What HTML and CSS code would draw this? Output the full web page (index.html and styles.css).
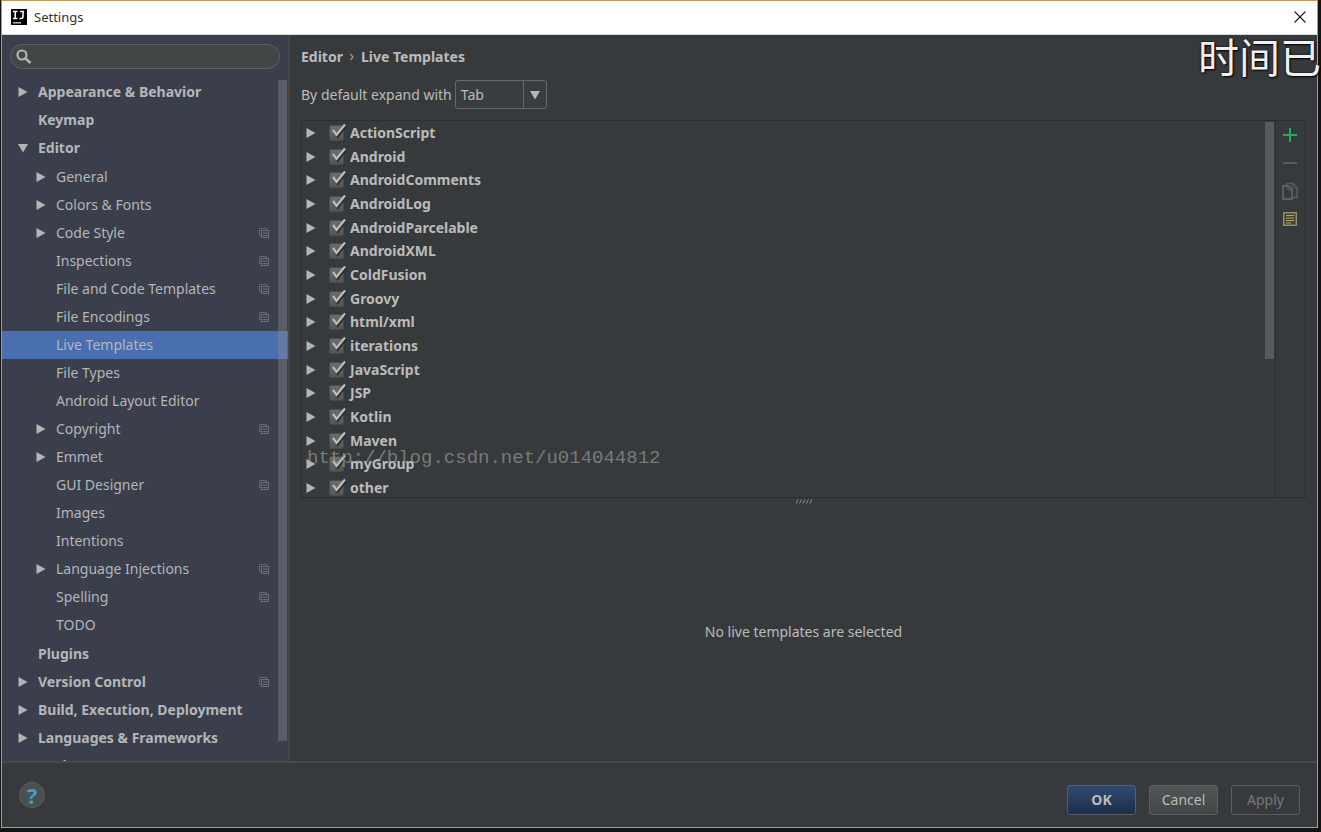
FILE: index.html
```
<!DOCTYPE html>
<html lang="en">
<head>
  <meta charset="UTF-8" />
  <title>Settings</title>
  <link rel="stylesheet" href="styles.css">
</head>
<body>

  <!-- Shared icons -->
  <svg class="defs" width="0" height="0">
    <symbol id="right" viewBox="0 0 10 10"><path d="M0.5 0L9.5 5L0.5 10Z" fill="#b4b4b4"/></symbol>
    <symbol id="down" viewBox="0 0 10 10"><path d="M0 1L10 1L5 9.5Z" fill="#b4b4b4"/></symbol>
    <symbol id="copy" viewBox="0 0 12 12">
      <path d="M3 8.5H1.5V1.5H8.5V3" fill="none" stroke="#5d6b75"/>
      <rect x="3.5" y="3.5" width="7" height="7" fill="none" stroke="#6c7176"/>
      <path d="M5 6H9.500M5 8.500H9.500" stroke="#6c7176"/>
    </symbol>
    <symbol id="tick" viewBox="0 0 18 17">
      <path d="M4.500 8L8.500 14L17 3" fill="none" stroke="#2b2b2b" stroke-width="2"/>
      <path d="M4 7L7.500 12L16 1.500" fill="none" stroke="#bdbdbd" stroke-width="2.200"/>
    </symbol>
  </svg>

  <div class="window">
    <header class="titlebar">
      <svg width="16" height="16" viewBox="0 0 16 16">
        <rect width="16" height="16" fill="#000"/>
        <path d="M2 2.500H6.500M4.250 2.500V9.500M2 9.500H6.500M9 2.500H13M12 2.500V7.500Q12 9.500 10 9.500H8.500" fill="none" stroke="#fff" stroke-width="1.500"/>
        <rect x="2" y="13" width="8" height="1.500" fill="#bbb"/>
      </svg>
      <span class="title">Settings</span>
      <button class="close" aria-label="Close">
        <svg width="12" height="12" viewBox="0 0 12 12"><path d="M0.500 0.500L11.500 11.500M11.500 0.500L0.500 11.500" stroke="#222" stroke-width="1.200"/></svg>
      </button>
    </header>

    <div class="content">
      <nav class="sidebar">
        <label class="search">
          <svg width="16" height="16" viewBox="0 0 16 16"><circle cx="6" cy="6" r="4.500" fill="none" stroke="#b4b4b4" stroke-width="2.200"/><path d="M9.500 9.500L14.500 14" stroke="#b4b4b4" stroke-width="2.500"/></svg>
          <input type="text" aria-label="Search settings">
        </label>
        <div class="tree">
          <ul>
            <li><a href="#" class="row top"><svg class="arrow"><use href="#right"/></svg><span>Appearance &amp; Behavior</span></a></li>
            <li><a href="#" class="row top"><i class="arrow"></i><span>Keymap</span></a></li>
            <li><a href="#" class="row top"><svg class="arrow"><use href="#down"/></svg><span>Editor</span></a>
              <ul class="children">
                <li><a href="#" class="row"><svg class="arrow"><use href="#right"/></svg><span>General</span></a></li>
                <li><a href="#" class="row"><svg class="arrow"><use href="#right"/></svg><span>Colors &amp; Fonts</span></a></li>
                <li><a href="#" class="row"><svg class="arrow"><use href="#right"/></svg><span>Code Style</span><svg class="copy"><use href="#copy"/></svg></a></li>
                <li><a href="#" class="row"><i class="arrow"></i><span>Inspections</span><svg class="copy"><use href="#copy"/></svg></a></li>
                <li><a href="#" class="row"><i class="arrow"></i><span>File and Code Templates</span><svg class="copy"><use href="#copy"/></svg></a></li>
                <li><a href="#" class="row"><i class="arrow"></i><span>File Encodings</span><svg class="copy"><use href="#copy"/></svg></a></li>
                <li><a href="#" class="row selected"><i class="arrow"></i><span>Live Templates</span></a></li>
                <li><a href="#" class="row"><i class="arrow"></i><span>File Types</span></a></li>
                <li><a href="#" class="row"><i class="arrow"></i><span>Android Layout Editor</span></a></li>
                <li><a href="#" class="row"><svg class="arrow"><use href="#right"/></svg><span>Copyright</span><svg class="copy"><use href="#copy"/></svg></a></li>
                <li><a href="#" class="row"><svg class="arrow"><use href="#right"/></svg><span>Emmet</span></a></li>
                <li><a href="#" class="row"><i class="arrow"></i><span>GUI Designer</span><svg class="copy"><use href="#copy"/></svg></a></li>
                <li><a href="#" class="row"><i class="arrow"></i><span>Images</span></a></li>
                <li><a href="#" class="row"><i class="arrow"></i><span>Intentions</span></a></li>
                <li><a href="#" class="row"><svg class="arrow"><use href="#right"/></svg><span>Language Injections</span><svg class="copy"><use href="#copy"/></svg></a></li>
                <li><a href="#" class="row"><i class="arrow"></i><span>Spelling</span><svg class="copy"><use href="#copy"/></svg></a></li>
                <li><a href="#" class="row"><i class="arrow"></i><span>TODO</span></a></li>
              </ul>
            </li>
            <li><a href="#" class="row top"><i class="arrow"></i><span>Plugins</span></a></li>
            <li><a href="#" class="row top"><svg class="arrow"><use href="#right"/></svg><span>Version Control</span><svg class="copy"><use href="#copy"/></svg></a></li>
            <li><a href="#" class="row top"><svg class="arrow"><use href="#right"/></svg><span>Build, Execution, Deployment</span></a></li>
            <li><a href="#" class="row top"><svg class="arrow"><use href="#right"/></svg><span>Languages &amp; Frameworks</span></a></li>
            <li><a href="#" class="row top"><i class="arrow"></i><span>Tools</span></a></li>
          </ul>
          <div class="scrollbar"></div>
        </div>
      </nav>

      <main class="main">
        <h1 class="crumbs"><span>Editor</span><svg width="6" height="8" viewBox="0 0 6 8"><path d="M1.500 1L4 4L1.500 7" fill="none" stroke="#999" stroke-width="1.200"/></svg><span>Live Templates</span></h1>
        <div class="expand">
          <label for="expandKey">By default expand with</label>
          <div class="combo">
            <select id="expandKey">
              <option>Tab</option>
              <option>Enter</option>
              <option>Space</option>
            </select>
            <span class="combo-arrow"><svg width="10" height="10"><use href="#down"/></svg></span>
          </div>
        </div>

        <section class="panel">
          <div class="list">
            <ul class="templates" id="templates"></ul>
            <div class="list-scroll"></div>
          </div>
          <div class="tools">
            <button aria-label="Add"><svg width="16" height="16" viewBox="0 0 16 16"><path d="M8 1V15M1 8H15" stroke="#27ae50" stroke-width="2"/></svg></button>
            <button aria-label="Remove" disabled><svg width="16" height="16" viewBox="0 0 16 16"><path d="M1 8H15" stroke="#5a5a5a" stroke-width="2"/></svg></button>
            <button aria-label="Copy" disabled><svg width="18" height="18" viewBox="0 0 18 18"><path d="M6 4V1.500H12L16 5.500V15.500H12" fill="none" stroke="#5c5c5c" stroke-width="1.500"/><path d="M11.500 1.500V6H16" fill="none" stroke="#5c5c5c"/><path d="M2 4H7.500L11 7.500V17H2Z" fill="#373a3c" stroke="#606060" stroke-width="1.800"/><path d="M7 4V8H11" fill="none" stroke="#606060"/></svg></button>
            <button aria-label="Restore defaults"><svg width="16" height="16" viewBox="0 0 16 16"><rect x="1.750" y="1.750" width="12.500" height="12.500" fill="#4c4420" stroke="#9b9783" stroke-width="1.300"/><path d="M4 4.500H12M4 7H12M4 9.500H12M4 12H9" stroke="#aaa37e" stroke-width="1.100"/></svg></button>
          </div>
        </section>

        <section class="details">
          <svg class="grip" width="18" height="5" viewBox="0 0 18 5"><path d="M1 4.500L3 0.500M4.500 4.500L6.500 0.500M8 4.500L10 0.500M11.500 4.500L13.500 0.500M15 4.500L17 0.500" stroke="#8a8a8a"/></svg>
          <p>No live templates are selected</p>
        </section>
      </main>
    </div>

    <footer class="footer">
      <button class="help" aria-label="Help">?</button>
      <div class="actions">
        <button class="btn ok">OK</button>
        <button class="btn">Cancel</button>
        <button class="btn" disabled>Apply</button>
      </div>
    </footer>
  </div>

  <div class="url-mark">http://blog.csdn.net/u014044812</div>
  <div class="time-mark" lang="zh">时间已</div>

  <script src="script.js"></script>
</body>
</html>
```

FILE: styles.css
```
* {
  box-sizing: border-box;
}

body {
  margin: 0;
  height: 100vh;
  padding: 0 3px 4px 1px;
  background-color: #141513;
  color: #bbb;
  font-family: "Noto Sans", "Noto Sans CJK SC", sans-serif;
  font-size: 14px;
  line-height: 20px;
  overflow: hidden;
}

ul {
  list-style: none;
  margin: 0;
  padding: 0;
}

button {
  font: inherit;
  color: inherit;
  background: none;
  border: none;
  padding: 0;
}

svg {
  flex: none;
}

.defs {
  position: absolute;
}

.window {
  height: 100%;
  display: flex;
  flex-direction: column;
  border: 1px solid #c9974f;
  background-color: #373a3c;
}

/* Title bar */
.titlebar {
  height: 34px;
  flex: none;
  display: flex;
  align-items: center;
  padding: 0 11px 2px 9px;
  background-color: #fff;
  color: #333;
  border-bottom: 1px solid #d5dadb;
}

.title {
  flex: 1;
  margin-left: 7px;
  font-size: 13px;
}

.close {
  display: flex;
}

.content {
  flex: 1;
  min-height: 0;
  display: flex;
}

/* Sidebar */
.sidebar {
  width: 288px;
  flex: none;
  display: flex;
  flex-direction: column;
  background-color: #3a3f4b;
  border-right: 2px solid #44474a;
}

.search {
  flex: none;
  height: 25px;
  margin: 9px 8px 9px 8px;
  display: flex;
  align-items: center;
  padding: 0 5px;
  background-color: #434647;
  border: 1px solid #5e6163;
  border-radius: 13px;
}

.search input {
  flex: 1;
  min-width: 0;
  background: none;
  border: none;
  outline: none;
  color: #bbb;
}

.tree {
  flex: 1;
  min-height: 0;
  position: relative;
  overflow: hidden;
}

.row {
  height: 28px;
  display: flex;
  align-items: center;
  padding: 0 18px 0 16px;
  color: #b4b6b9;
  text-decoration: none;
}

.row span {
  flex: 1;
}

.children {
  padding: 1px 0;
}

.children .row {
  padding-left: 34px;
}

.top {
  font-weight: bold;
}

.selected {
  background-color: #4a6fb1;
}

.arrow {
  width: 10px;
  height: 10px;
  margin-right: 10px;
  flex: none;
}

.copy {
  width: 12px;
  height: 12px;
}

.scrollbar {
  position: absolute;
  top: 2px;
  right: 1px;
  bottom: 20px;
  width: 9px;
  background-color: rgba(140, 140, 145, 0.4);
}

/* Main */
.main {
  flex: 1;
  min-width: 0;
  display: flex;
  flex-direction: column;
  padding: 12px 11px 0;
}

.crumbs {
  flex: none;
  display: flex;
  align-items: center;
  gap: 6px;
  margin: 0 0 13px;
  font-size: 14px;
  line-height: 20px;
}

.expand {
  flex: none;
  display: flex;
  align-items: center;
  gap: 3px;
  margin-bottom: 11px;
}

.combo {
  width: 92px;
  height: 29px;
  display: flex;
  position: relative;
}

.combo select {
  flex: 1;
  appearance: none;
  padding: 0 5px;
  font: inherit;
  color: #bbb;
  background-color: #3a3d3f;
  border: 1px solid #66696b;
  border-radius: 3px;
}

.combo-arrow {
  position: absolute;
  top: 0;
  right: 0;
  bottom: 0;
  width: 24px;
  display: flex;
  align-items: center;
  justify-content: center;
  border-left: 1px solid #66696b;
  pointer-events: none;
}

.panel {
  flex: 10 1 0;
  min-height: 0;
  display: flex;
  border: 1px solid #2b2d2e;
}

.list {
  flex: 1;
  display: flex;
  justify-content: space-between;
  overflow: hidden;
}

.templates {
  flex: 1;
  display: flex;
  flex-direction: column;
  justify-content: space-between;
  padding-top: 3px;
}

.templates li {
  height: 18px;
  display: flex;
  align-items: center;
  padding-left: 4px;
}

.templates label {
  display: flex;
  align-items: center;
  gap: 6px;
  margin-left: 3px;
  font-weight: bold;
  line-height: 18px;
}

.check {
  display: flex;
  position: relative;
}

.check input {
  appearance: none;
  width: 15px;
  height: 16px;
  margin: 0;
  background: linear-gradient(#6c6c6c, #555);
  border: 1px solid #484a4b;
  border-radius: 2px;
}

.check svg {
  position: absolute;
  top: -2px;
  left: 0;
  pointer-events: none;
}

.list-scroll {
  width: 9px;
  height: 63%;
  margin: 1px 1px 0 0;
  background-color: #585b5d;
}

.tools {
  width: 30px;
  display: flex;
  flex-direction: column;
  padding-right: 2px;
  border-left: 1px solid #2b2d2e;
}

.tools button {
  height: 28px;
  display: flex;
  align-items: center;
  justify-content: center;
}

.details {
  flex: 7 1 0;
  min-height: 0;
  display: flex;
  flex-direction: column;
  align-items: center;
}

.details p {
  margin: auto;
}

.grip {
  margin-top: 1px;
}

/* Footer */
.footer {
  height: 66px;
  flex: none;
  display: flex;
  align-items: center;
  justify-content: space-between;
  padding: 1px 17px 0;
  border-top: 2px solid #48494a;
}

.help {
  width: 26px;
  height: 26px;
  margin-bottom: 2px;
  border: 1px solid #5c6062;
  border-radius: 13px;
  background-color: #4a4f51;
  color: #459cc9;
  font-size: 22px;
  font-weight: bold;
  line-height: 24px;
}

.actions {
  display: flex;
  gap: 13px;
  padding-top: 8px;
}

.btn {
  width: 69px;
  height: 30px;
  border: 1px solid #5c5f61;
  border-radius: 3px;
  background: linear-gradient(#505556, #414648);
}

.btn.ok {
  background: linear-gradient(#2f4a70, #1c2f4b);
  font-weight: bold;
}

.btn:disabled {
  background: none;
  color: #777;
}

/* Overlays */
.url-mark {
  position: absolute;
  left: 307px;
  top: 446px;
  font-family: "Liberation Mono", monospace;
  font-size: 19px;
  line-height: 24px;
  color: rgba(160, 160, 155, 0.65);
  pointer-events: none;
}

.time-mark {
  position: absolute;
  top: 27px;
  right: 0;
  font-family: "Noto Sans CJK SC", sans-serif;
  font-size: 41px;
  line-height: 56px;
  color: #f0f0f4;
  text-shadow: 0 0 2px #000, 1px 1px 2px #000;
  pointer-events: none;
}
```

FILE: script.js
```
const groups = [
  "ActionScript", "Android", "AndroidComments", "AndroidLog",
  "AndroidParcelable", "AndroidXML", "ColdFusion", "Groovy",
  "html/xml", "iterations", "JavaScript", "JSP",
  "Kotlin", "Maven", "myGroup", "other"
];

const list = document.getElementById("templates");

groups.forEach((name) => {
  const li = document.createElement("li");
  li.innerHTML = `
    <svg class="arrow"><use href="#right"/></svg>
    <label>
      <span class="check">
        <input type="checkbox" checked>
        <svg width="18" height="17"><use href="#tick"/></svg>
      </span>
      ${name}
    </label>`;
  list.appendChild(li);
});
```
